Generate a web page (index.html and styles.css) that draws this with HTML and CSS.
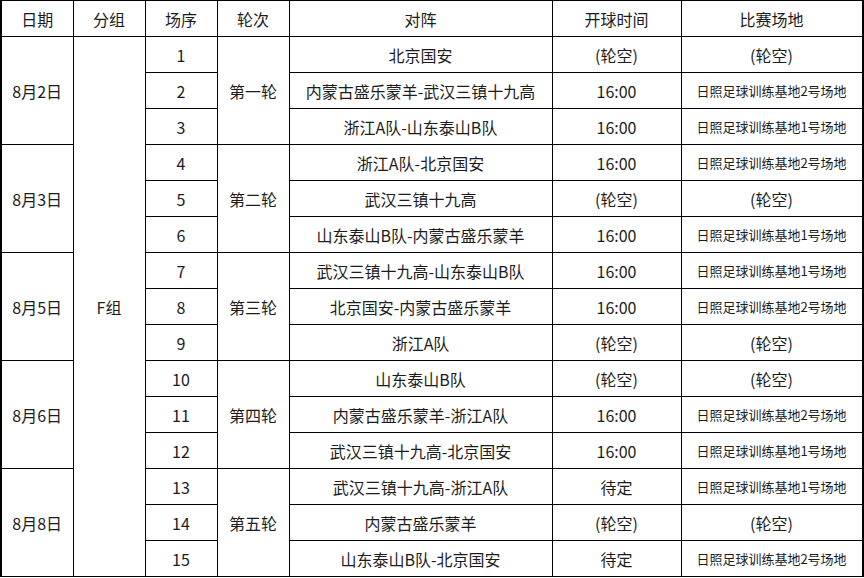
FILE: index.html
```html
<!DOCTYPE html>
<html lang="zh">
<head>
<meta charset="utf-8">
<link rel="stylesheet" href="styles.css">
</head>
<body>
<div class="frame">
<table class="schedule">
  <colgroup>
    <col class="c-date"><col class="c-group"><col class="c-no"><col class="c-round"><col class="c-match"><col class="c-time"><col class="c-venue">
  </colgroup>
  <thead>
    <tr><th>日期</th><th>分组</th><th>场序</th><th>轮次</th><th>对阵</th><th>开球时间</th><th>比赛场地</th></tr>
  </thead>
  <tbody>
    <tr><td rowspan="3">8月2日</td><td rowspan="15">F组</td><td>1</td><td rowspan="3">第一轮</td><td>北京国安</td><td>(轮空)</td><td class="bye">(轮空)</td></tr>
    <tr><td>2</td><td>内蒙古盛乐蒙羊-武汉三镇十九高</td><td>16:00</td><td class="venue">日照足球训练基地2号场地</td></tr>
    <tr><td>3</td><td>浙江A队-山东泰山B队</td><td>16:00</td><td class="venue">日照足球训练基地1号场地</td></tr>

    <tr><td rowspan="3">8月3日</td><td>4</td><td rowspan="3">第二轮</td><td>浙江A队-北京国安</td><td>16:00</td><td class="venue">日照足球训练基地2号场地</td></tr>
    <tr><td>5</td><td>武汉三镇十九高</td><td>(轮空)</td><td class="bye">(轮空)</td></tr>
    <tr><td>6</td><td>山东泰山B队-内蒙古盛乐蒙羊</td><td>16:00</td><td class="venue">日照足球训练基地1号场地</td></tr>

    <tr><td rowspan="3">8月5日</td><td>7</td><td rowspan="3">第三轮</td><td>武汉三镇十九高-山东泰山B队</td><td>16:00</td><td class="venue">日照足球训练基地1号场地</td></tr>
    <tr><td>8</td><td>北京国安-内蒙古盛乐蒙羊</td><td>16:00</td><td class="venue">日照足球训练基地2号场地</td></tr>
    <tr><td>9</td><td>浙江A队</td><td>(轮空)</td><td class="bye">(轮空)</td></tr>

    <tr><td rowspan="3">8月6日</td><td>10</td><td rowspan="3">第四轮</td><td>山东泰山B队</td><td>(轮空)</td><td class="bye">(轮空)</td></tr>
    <tr><td>11</td><td>内蒙古盛乐蒙羊-浙江A队</td><td>16:00</td><td class="venue">日照足球训练基地2号场地</td></tr>
    <tr><td>12</td><td>武汉三镇十九高-北京国安</td><td>16:00</td><td class="venue">日照足球训练基地1号场地</td></tr>

    <tr><td rowspan="3">8月8日</td><td>13</td><td rowspan="3">第五轮</td><td>武汉三镇十九高-浙江A队</td><td>待定</td><td class="venue">日照足球训练基地1号场地</td></tr>
    <tr><td>14</td><td>内蒙古盛乐蒙羊</td><td>(轮空)</td><td class="bye">(轮空)</td></tr>
    <tr><td>15</td><td>山东泰山B队-北京国安</td><td>待定</td><td class="venue">日照足球训练基地2号场地</td></tr>
  </tbody>
</table>
</div>
</body>
</html>
```

FILE: styles.css
```css
html, body {
  margin: 0;
  padding: 0;
  background: #fff;
}
.frame {
  width: 861px;
  border-right: 2px solid #000;
  padding-right: 1px;
  height: 577px;
}
.schedule {
  border-collapse: collapse;
  table-layout: fixed;
  width: 861px;
  font-family: "Noto Sans CJK SC", "Microsoft YaHei", sans-serif;
  font-size: 16px;
  color: #1c1c1c;
  border-left: 2px solid #000;
  border-bottom: 2px solid #000;
}
.c-date, .c-group, .c-no, .c-round { width: 72px; }
.c-match { width: 263px; }
.c-time { width: 129px; }
.c-venue { width: 181px; }
.schedule th,
.schedule td {
  border: 1px solid #000;
  text-align: center;
  vertical-align: middle;
  font-weight: 400;
  padding: 0;
  height: 35px;
  line-height: 20px;
  white-space: nowrap;
}
.schedule td.venue {
  font-size: 13px;
  letter-spacing: 0;
}
```
